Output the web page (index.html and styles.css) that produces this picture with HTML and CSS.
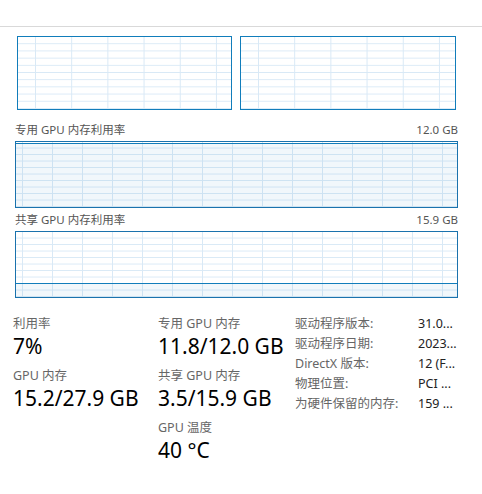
FILE: index.html
```html
<!DOCTYPE html>
<html lang="zh-CN">
<head>
<meta charset="utf-8">
<link rel="stylesheet" href="styles.css">
</head>
<body>
<div class="topbar"></div>
<div class="engines">
  <div class="graph small"></div>
  <div class="graph small wide"></div>
</div>
<div class="glabel first"><span>专用 GPU 内存利用率</span><span>12.0 GB</span></div>
<div class="graph big"><div class="fill" style="height: 98.3%"></div></div>
<div class="glabel"><span>共享 GPU 内存利用率</span><span>15.9 GB</span></div>
<div class="graph big"><div class="fill" style="height: 22%"></div></div>
<div class="stats">
  <div class="col c1">
    <div class="stat"><div class="lbl">利用率</div><div class="val">7%</div></div>
    <div class="stat"><div class="lbl">GPU 内存</div><div class="val">15.2/27.9 GB</div></div>
  </div>
  <div class="col c2">
    <div class="stat"><div class="lbl">专用 GPU 内存</div><div class="val">11.8/12.0 GB</div></div>
    <div class="stat"><div class="lbl">共享 GPU 内存</div><div class="val">3.5/15.9 GB</div></div>
    <div class="stat"><div class="lbl">GPU 温度</div><div class="val">40 °C</div></div>
  </div>
  <div class="props">
    <div class="pk">驱动程序版本:</div><div class="pv">31.0...</div>
    <div class="pk">驱动程序日期:</div><div class="pv">2023...</div>
    <div class="pk">DirectX 版本:</div><div class="pv">12 (F...</div>
    <div class="pk">物理位置:</div><div class="pv">PCI ...</div>
    <div class="pk">为硬件保留的内存:</div><div class="pv">159 ...</div>
  </div>
</div>
</body>
</html>
```

FILE: styles.css
```css
html, body {
  margin: 0;
  padding: 0;
  background: #ffffff;
}
body {
  width: 482px;
  height: 494px;
  overflow: hidden;
  font-family: "Noto Sans", "Noto Sans CJK SC", sans-serif;
  color: #000;
}
.topbar {
  height: 26px;
  border-bottom: 1px solid #d9d9d9;
}
.engines {
  display: flex;
  gap: 8px;
  margin: 9px 0 0 17px;
}
.graph {
  box-sizing: border-box;
  border: 1px solid #117dbb;
  background-color: #fff;
}
.graph.small {
  width: 215px;
  height: 74px;
  background-image:
    linear-gradient(to right, #d9e9f6 0, #d9e9f6 1px, transparent 1px),
    linear-gradient(to bottom, transparent calc(100% - 1px), #d9e9f6 calc(100% - 1px));
  background-size: 36.2px 100%, 100% 10%;
  background-position: 17px 0, 0 0;
}
.graph.small.wide {
  width: 216px;
}
.graph.big {
  width: 443px;
  height: 67px;
  margin-left: 15px;
  display: flex;
  flex-direction: column;
  justify-content: flex-end;
  border-color: #1a72ad;
  background-image:
    linear-gradient(to right, #d9e9f6 0, #d9e9f6 1px, transparent 1px),
    linear-gradient(to bottom, transparent calc(100% - 1px), #d9e9f6 calc(100% - 1px));
  background-size: 30px 100%, 100% 10%;
  background-position: 6px 0, 0 0;
}
.fill {
  box-sizing: border-box;
  border-top: 1px solid #117dbb;
  background: rgba(17, 125, 187, 0.06);
}
.glabel {
  display: flex;
  justify-content: space-between;
  width: 443px;
  margin: 4px 0 3px 15px;
  font-size: 11.5px;
  line-height: 16px;
  color: #555;
}
.glabel.first {
  margin-top: 12px;
}
.stats {
  display: flex;
  align-items: flex-start;
  margin: 18px 0 0 13px;
}
.col {
  display: flex;
  flex-direction: column;
  gap: 9px;
}
.c1 { width: 145px; }
.c2 { width: 137px; }
.lbl {
  font-size: 12.5px;
  line-height: 16px;
  color: #666;
}
.val {
  font-size: 21px;
  line-height: 26px;
  margin-top: 1px;
  color: #000;
}
.props {
  display: grid;
  grid-template-columns: 123px auto;
  align-content: start;
  margin-top: -2px;
  font-size: 12.5px;
  line-height: 20px;
}
.pk { color: #666; }
.pv { color: #222; }
```
